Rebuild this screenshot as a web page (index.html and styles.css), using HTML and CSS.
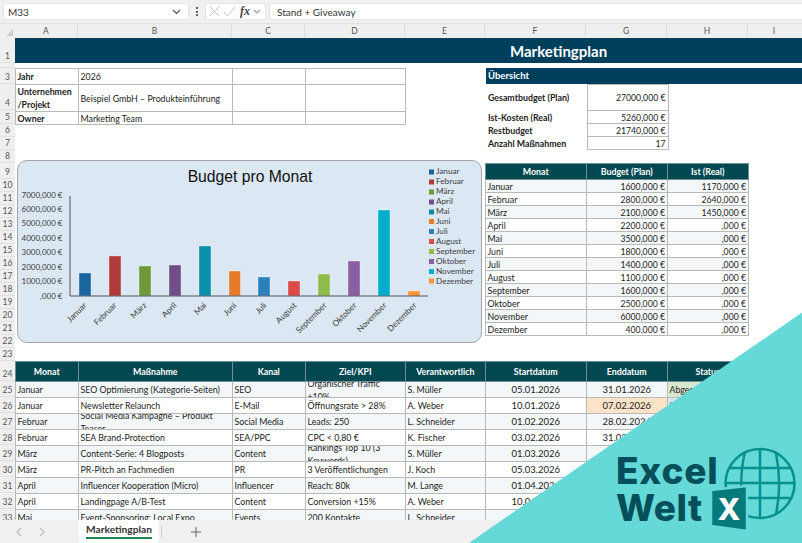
FILE: index.html
```html
<!DOCTYPE html>
<html lang="de">
<head>
<meta charset="utf-8">
<title>Marketingplan</title>
<link rel="stylesheet" href="styles.css">
</head>
<body>
<div class="app">
  <div class="formula-bar">
    <div class="name-box"><span>M33</span>
      <svg class="chev" width="9" height="6" viewBox="0 0 9 6"><path d="M1 1l3.500 3.500L8 1"/></svg>
    </div>
    <div class="dots"><i></i><i></i><i></i></div>
    <div class="fx-box">
      <svg class="mark" width="11" height="11" viewBox="0 0 11 11"><path d="M1 1l9 9M10 1l-9 9"/></svg>
      <svg class="mark" width="13" height="11" viewBox="0 0 13 11"><path d="M1 6l3.500 4L12 1"/></svg>
      <span class="fx">fx</span>
      <svg class="chev light" width="8" height="5" viewBox="0 0 8 5"><path d="M1 1l3 3 3-3"/></svg>
    </div>
    <div class="formula-input">Stand + Giveaway</div>
  </div>

  <div class="col-heads">
    <div class="corner"><svg width="15" height="13" viewBox="0 0 15 13"><path d="M13 5v7H6z"/></svg></div>
    <div class="ch a">A</div><div class="ch b">B</div><div class="ch c">C</div><div class="ch d">D</div>
    <div class="ch e">E</div><div class="ch f">F</div><div class="ch g">G</div><div class="ch h">H</div><div class="ch i">I</div>
  </div>

  <div class="main">
    <div class="row-heads">
      <div class="rh r1">1</div><div class="rh r2"></div><div class="rh r3">3</div><div class="rh r4">4</div>
      <div class="rh r5">5</div><div class="rh">6</div><div class="rh">7</div><div class="rh">8</div>
      <div class="rh r3">9</div><div class="rh">10</div><div class="rh">11</div><div class="rh">12</div>
      <div class="rh">13</div><div class="rh">14</div><div class="rh">15</div><div class="rh">16</div>
      <div class="rh">17</div><div class="rh">18</div><div class="rh">19</div><div class="rh">20</div>
      <div class="rh">21</div><div class="rh">22</div><div class="rh">23</div><div class="rh r24">24</div>
      <div class="rh r3">25</div><div class="rh r3">26</div><div class="rh r3">27</div><div class="rh r3">28</div>
      <div class="rh r3">29</div><div class="rh r3">30</div><div class="rh r3">31</div><div class="rh r3">32</div>
      <div class="rh r3">33</div>
    </div>

    <div class="sheet">
      <div class="banner">Marketingplan</div>

      <div class="top">
        <table class="grid info">
          <colgroup><col class="ca"><col class="cb"><col class="cc"><col class="cd"></colgroup>
          <tr class="h16"><th>Jahr</th><td>2026</td><td></td><td></td></tr>
          <tr class="h26"><th class="wrap">Unternehmen<br>/Projekt</th><td>Beispiel GmbH – Produkteinführung</td><td></td><td></td></tr>
          <tr class="h13"><th>Owner</th><td>Marketing Team</td><td></td><td></td></tr>
        </table>

        <div class="overview">
          <div class="overview-head">Übersicht</div>
          <table class="kpis">
            <colgroup><col class="cf"><col class="cg"></colgroup>
            <tr class="h26"><th>Gesamtbudget (Plan)</th><td>27000,000 €</td></tr>
            <tr class="h13"><th>Ist-Kosten (Real)</th><td>5260,000 €</td></tr>
            <tr class="h13"><th>Restbudget</th><td>21740,000 €</td></tr>
            <tr class="h13"><th>Anzahl Maßnahmen</th><td>17</td></tr>
          </table>
        </div>
      </div>

      <div class="middle">
        <div class="chart">
          <svg width="465" height="183" viewBox="17 160 465 183">
            <text class="c-title" x="250" y="181.500" text-anchor="middle">Budget pro Monat</text>
            <g class="c-tick" text-anchor="end">
              <text x="62.500" y="197.500">7000,000 €</text><text x="62.500" y="211.500">6000,000 €</text>
              <text x="62.500" y="226">5000,000 €</text><text x="62.500" y="241">4000,000 €</text>
              <text x="62.500" y="255">3000,000 €</text><text x="62.500" y="270">2000,000 €</text>
              <text x="62.500" y="284">1000,000 €</text><text x="62.500" y="299">,000 €</text>
            </g>
            <g class="c-bars">
              <rect x="79" y="273" width="12" height="23" fill="#1a659e"/>
              <rect x="109" y="256" width="12" height="40" fill="#b33a3a"/>
              <rect x="139" y="266" width="12" height="30" fill="#6f9a3a"/>
              <rect x="169" y="265" width="12" height="31" fill="#6f4e8a"/>
              <rect x="199" y="246" width="12" height="50" fill="#0a8fa8"/>
              <rect x="229" y="271" width="11.500" height="25" fill="#e67c2a"/>
              <rect x="258" y="277" width="12" height="19" fill="#2a7fbd"/>
              <rect x="288" y="281" width="12" height="15" fill="#dd4a4a"/>
              <rect x="318" y="274" width="12" height="22" fill="#8ebc4b"/>
              <rect x="348" y="261" width="12" height="35" fill="#8b5fa3"/>
              <rect x="378" y="210" width="12" height="86" fill="#00aecb"/>
              <rect x="408" y="291" width="12" height="5" fill="#fb9433"/>
            </g>
            <path class="c-axis" d="M70 196v100h358"/>
            <g class="c-cat" text-anchor="end">
              <text transform="translate(87 306) rotate(-45)">Januar</text>
              <text transform="translate(117 306) rotate(-45)">Februar</text>
              <text transform="translate(147 306) rotate(-45)">März</text>
              <text transform="translate(177 306) rotate(-45)">April</text>
              <text transform="translate(207 306) rotate(-45)">Mai</text>
              <text transform="translate(237 306) rotate(-45)">Juni</text>
              <text transform="translate(267 306) rotate(-45)">Juli</text>
              <text transform="translate(297 306) rotate(-45)">August</text>
              <text transform="translate(327 306) rotate(-45)">September</text>
              <text transform="translate(357 306) rotate(-45)">Oktober</text>
              <text transform="translate(387 306) rotate(-45)">November</text>
              <text transform="translate(417 306) rotate(-45)">Dezember</text>
            </g>
            <g class="c-legend">
              <rect x="429" y="169.500" width="5" height="5" fill="#1a659e"/><text x="436" y="174">Januar</text>
              <rect x="429" y="179.500" width="5" height="5" fill="#b33a3a"/><text x="436" y="184">Februar</text>
              <rect x="429" y="189.500" width="5" height="5" fill="#6f9a3a"/><text x="436" y="194">März</text>
              <rect x="429" y="199.500" width="5" height="5" fill="#6f4e8a"/><text x="436" y="204">April</text>
              <rect x="429" y="209.500" width="5" height="5" fill="#0a8fa8"/><text x="436" y="214">Mai</text>
              <rect x="429" y="219" width="5" height="5" fill="#e67c2a"/><text x="436" y="224">Juni</text>
              <rect x="429" y="229" width="5" height="5" fill="#2a7fbd"/><text x="436" y="234">Juli</text>
              <rect x="429" y="239" width="5" height="5" fill="#dd4a4a"/><text x="436" y="244">August</text>
              <rect x="429" y="249" width="5" height="5" fill="#8ebc4b"/><text x="436" y="254">September</text>
              <rect x="429" y="259" width="5" height="5" fill="#8b5fa3"/><text x="436" y="264">Oktober</text>
              <rect x="429" y="269" width="5" height="5" fill="#00aecb"/><text x="436" y="274">November</text>
              <rect x="429" y="278.500" width="5" height="5" fill="#fb9433"/><text x="436" y="283.500">Dezember</text>
            </g>
          </svg>
        </div>

        <table class="grid months">
          <colgroup><col class="cf"><col class="cg"><col class="cg"></colgroup>
          <tr class="head h16"><th>Monat</th><th>Budget (Plan)</th><th>Ist (Real)</th></tr>
          <tr class="h13 alt"><td>Januar</td><td class="num">1600,000 €</td><td class="num">1170,000 €</td></tr>
          <tr class="h13"><td>Februar</td><td class="num">2800,000 €</td><td class="num">2640,000 €</td></tr>
          <tr class="h13 alt"><td>März</td><td class="num">2100,000 €</td><td class="num">1450,000 €</td></tr>
          <tr class="h13"><td>April</td><td class="num">2200,000 €</td><td class="num">,000 €</td></tr>
          <tr class="h13 alt"><td>Mai</td><td class="num">3500,000 €</td><td class="num">,000 €</td></tr>
          <tr class="h13"><td>Juni</td><td class="num">1800,000 €</td><td class="num">,000 €</td></tr>
          <tr class="h13 alt"><td>Juli</td><td class="num">1400,000 €</td><td class="num">,000 €</td></tr>
          <tr class="h13"><td>August</td><td class="num">1100,000 €</td><td class="num">,000 €</td></tr>
          <tr class="h13 alt"><td>September</td><td class="num">1600,000 €</td><td class="num">,000 €</td></tr>
          <tr class="h13"><td>Oktober</td><td class="num">2500,000 €</td><td class="num">,000 €</td></tr>
          <tr class="h13 alt"><td>November</td><td class="num">6000,000 €</td><td class="num">,000 €</td></tr>
          <tr class="h13"><td>Dezember</td><td class="num">400,000 €</td><td class="num">,000 €</td></tr>
        </table>
      </div>

      <table class="grid plan">
        <colgroup><col class="ca"><col class="cb"><col class="cc"><col class="cd"><col class="ce"><col class="cf"><col class="cg"><col class="cg"></colgroup>
        <tr class="head h20"><th>Monat</th><th>Maßnahme</th><th>Kanal</th><th>Ziel/KPI</th><th>Verantwortlich</th><th>Startdatum</th><th>Enddatum</th><th>Status</th></tr>
        <tr class="h16 alt"><td>Januar</td><td>SEO Optimierung (Kategorie-Seiten)</td><td>SEO</td><td><div class="clip">Organischer Traffic +10%</div></td><td>S. Müller</td><td class="ctr">05.01.2026</td><td class="ctr">31.01.2026</td><td class="done">Abgeschlossen</td></tr>
        <tr class="h16"><td>Januar</td><td>Newsletter Relaunch</td><td>E-Mail</td><td>Öffnungsrate &gt; 28%</td><td>A. Weber</td><td class="ctr">10.01.2026</td><td class="ctr warn">07.02.2026</td><td class="busy">In Arbeit</td></tr>
        <tr class="h16 alt"><td>Februar</td><td><div class="clip">Social Media Kampagne – Produkt Teaser</div></td><td>Social Media</td><td>Leads: 250</td><td>L. Schneider</td><td class="ctr">01.02.2026</td><td class="ctr">28.02.2026</td><td></td></tr>
        <tr class="h16"><td>Februar</td><td>SEA Brand-Protection</td><td>SEA/PPC</td><td>CPC &lt; 0,80 €</td><td>K. Fischer</td><td class="ctr">03.02.2026</td><td class="ctr">31.03.2026</td><td></td></tr>
        <tr class="h16 alt"><td>März</td><td>Content-Serie: 4 Blogposts</td><td>Content</td><td><div class="clip">Rankings Top 10 (3 Keywords)</div></td><td>S. Müller</td><td class="ctr">01.03.2026</td><td></td><td></td></tr>
        <tr class="h16"><td>März</td><td>PR-Pitch an Fachmedien</td><td>PR</td><td>3 Veröffentlichungen</td><td>J. Koch</td><td class="ctr">05.03.2026</td><td></td><td></td></tr>
        <tr class="h16 alt"><td>April</td><td>Influencer Kooperation (Micro)</td><td>Influencer</td><td>Reach: 80k</td><td>M. Lange</td><td class="ctr">01.04.2026</td><td></td><td></td></tr>
        <tr class="h16"><td>April</td><td>Landingpage A/B-Test</td><td>Content</td><td>Conversion +15%</td><td>A. Weber</td><td class="ctr">10.04.2026</td><td></td><td></td></tr>
        <tr class="h16 alt"><td>Mai</td><td>Event-Sponsoring: Local Expo</td><td>Events</td><td>200 Kontakte</td><td>L. Schneider</td><td class="ctr">05.05.2026</td><td></td><td></td></tr>
      </table>
    </div>
  </div>

  <div class="tabs">
    <svg class="nav" width="6" height="10" viewBox="0 0 6 10"><path d="M5 1L1 5l4 4"/></svg>
    <svg class="nav" width="6" height="10" viewBox="0 0 6 10"><path d="M1 1l4 4-4 4"/></svg>
    <div class="tab"><span>Marketingplan</span></div>
    <div class="tab-sep"></div>
    <svg class="plus" width="10" height="10" viewBox="0 0 10 10"><path d="M5 0v10M0 5h10"/></svg>
  </div>

  <svg class="badge" width="333" height="231" viewBox="469 312 333 231">
    <path class="badge-bg" d="M802 312.500V543H469z"/>
    <g class="globe">
      <circle cx="760" cy="483.500" r="34.500"/>
      <path d="M745 452c-5 20-5 44 0 63M760 449v69M776 453c4 20 4 42 0 61M730 468h60M726 483h68M730 498h60"/>
    </g>
    <text class="logo-word excel" x="616" y="483.500">Excel</text>
    <text class="logo-word welt" x="616" y="521">Welt</text>
    <path class="x-box" d="M711 490l36-4v45l-36-5z"/>
    <text class="x-mark" x="729" y="520" text-anchor="middle">X</text>
  </svg>
</div>
</body>
</html>
```
FILE: styles.css
```css
* { box-sizing: border-box; }
html, body { margin: 0; padding: 0; }
body { width: 802px; height: 543px; overflow: hidden; background: #fff; font-family: "Lato", "Liberation Sans", sans-serif; font-size: 8.800px; color: #1c1c1c; }
.app { position: relative; width: 802px; height: 543px; display: flex; flex-direction: column; overflow: hidden; }

.formula-bar { height: 24px; flex: none; display: flex; align-items: flex-start; background: #f0f0f0; padding: 3px 0 0 3px; border-bottom: 1px solid #e2e2e2; }
.name-box { width: 186px; height: 17px; background: #fff; border-radius: 3px; border: 1px solid #e4e4e4; display: flex; align-items: center; justify-content: space-between; padding: 0 7px 0 4px; font-size: 10px; color: #333; }
.chev { fill: none; stroke: #555; stroke-width: 1.200; }
.chev.light { stroke: #999; }
.dots { width: 16px; height: 17px; display: flex; flex-direction: column; align-items: center; justify-content: center; gap: 1.500px; }
.dots i { width: 2px; height: 2px; background: #666; }
.fx-box { width: 61px; height: 17px; background: #fff; border-radius: 3px; border: 1px solid #e4e4e4; display: flex; align-items: center; gap: 3px; padding-left: 3px; }
.mark { fill: none; stroke: #c6c6c6; stroke-width: 1; }
.fx { font-family: "Liberation Serif", serif; font-style: italic; font-size: 12px; font-weight: 700; color: #444; margin-left: 1px; }
.formula-input { flex: 1; height: 17px; margin-left: 3px; background: #fff; border: 1px solid #e4e4e4; border-right: 0; border-radius: 3px 0 0 3px; padding-left: 7px; display: flex; align-items: center; font-size: 10px; color: #333; }

.col-heads { height: 14px; flex: none; display: flex; background: #efefef; }
.corner { width: 15px; }
.corner path { fill: #cfcfcf; }
.ch { text-align: center; font-size: 8.500px; line-height: 14px; color: #555; border-right: 1px solid #dcdcdc; }
.ch.a { width: 63px; }
.ch.b { width: 154px; }
.ch.c { width: 73px; }
.ch.d { width: 100px; }
.ch.e { width: 80px; }
.ch.f { width: 101px; }
.ch.g { width: 81px; }
.ch.h { width: 81px; }
.ch.i { flex: 1; border-right: 0; padding-right: 2px; }

.main { flex: 1; min-height: 0; display: flex; overflow: hidden; }
.row-heads { width: 15px; flex: none; background: #efefef; }
.rh { height: 13px; font-size: 8.500px; line-height: 11px; color: #555; border-bottom: 1px solid #e0e0e0; display: flex; align-items: flex-end; justify-content: center; }
.rh.r1 { height: 25px; }
.rh.r2 { height: 5px; }
.rh.r3 { height: 16px; }
.rh.r4 { height: 26px; }
.rh.r5 { height: 14px; }
.rh.r24 { height: 20px; }

.sheet { flex: 1; min-width: 0; }
.banner { height: 25px; background: #003f5b; color: #fff; font-weight: 700; font-size: 15px; line-height: 27px; padding-left: 495px; margin-bottom: 5px; }

.top { display: flex; align-items: flex-start; gap: 80px; height: 82px; }
.grid, .kpis { border-collapse: collapse; table-layout: fixed; flex: none; }
.grid td, .grid th { border: 1px solid #b9b9b9; padding: 0 2px 0 1.500px; overflow: hidden; white-space: nowrap; font-weight: 400; text-align: left; line-height: 11px; }
.grid th { font-weight: 700; }
.ca { width: 63px; }
.cb { width: 154px; }
.cc { width: 73px; }
.cd { width: 100px; }
.ce { width: 80px; }
.cf { width: 101px; }
.cg { width: 81px; }
.h13 { height: 13px; }
.h16 { height: 16px; }
.h20 { height: 20px; }
.h26 { height: 26px; }
.info { width: 390px; }
.info th.wrap { line-height: 13px; }

.overview { flex: 1; min-width: 0; }
.overview-head { height: 16px; background: #003f5b; color: #fff; font-weight: 700; font-size: 9.500px; line-height: 16px; padding-left: 2px; }
.kpis { width: 182px; }
.kpis th { text-align: left; font-weight: 700; font-size: 8.800px; padding: 0 2px; line-height: 11px; white-space: nowrap; }
.kpis td { border: 1px solid #b9b9b9; text-align: right; font-size: 8.700px; padding: 0 2px; line-height: 11px; }

.middle { display: flex; align-items: flex-start; gap: 3px; height: 201px; margin-top: 10px; padding-left: 2px; }
.chart { width: 465px; height: 183px; flex: none; background: #dbe7f3; border: 1px solid #a6a6a6; border-radius: 10px; overflow: hidden; }
.chart svg { display: block; margin: -1px; }
.c-title { font-family: "Liberation Sans", sans-serif; font-size: 15.700px; fill: #111; }
.c-tick { font-family: "Lato", sans-serif; font-size: 8px; fill: #404040; }
.c-cat, .c-legend { font-family: "Lato", sans-serif; font-size: 8.200px; fill: #404040; }
.c-bars rect { stroke: #fff; stroke-opacity: .35; stroke-width: 1; }
.c-axis { fill: none; stroke: #50565c; stroke-width: 1; }
.months { width: 263px; margin-top: 3px; }
.head th { background: #024850; color: #fff; text-align: center; border-color: #6d8f95; }
.alt td { background: #f3f7f9; }
.grid td.num { text-align: right; font-size: 8.700px; }
.grid td.ctr { text-align: center; font-size: 9.500px; }
.grid td.warn { background: #fde3c8; }
.grid td.done { background: #d8e9d2; }
.grid td.busy { background: #dce6f1; }

.plan { width: 733px; }
.clip { height: 15px; display: flex; align-items: center; overflow: hidden; white-space: normal; line-height: 13px; }

.tabs { height: 23px; flex: none; display: flex; align-items: center; background: #f0f0f0; position: relative; padding-left: 16px; }
.nav { fill: none; stroke: #bcbcbc; stroke-width: 1.200; margin-right: 17px; }
.tab { width: 80px; height: 23px; margin-left: 17px; background: #fff; border-radius: 0 0 4px 4px; text-align: center; font-weight: 700; font-size: 10.200px; color: #333; padding-top: 3px; }
.tab span { display: inline-block; line-height: 13px; border-bottom: 2px solid #1e8a4f; padding-bottom: 1px; }
.tab-sep { width: 1px; height: 13px; margin-left: 2px; background: #cfcfcf; }
.plus { fill: none; stroke: #666; stroke-width: 1; margin-left: 29px; }

.badge { position: absolute; right: 0; bottom: 0; }
.badge-bg { fill: #65d9d8; }
.logo-word { font-family: "Inter", sans-serif; font-weight: 800; font-size: 37px; fill: #03505a; }
.excel { letter-spacing: .800px; }
.welt { letter-spacing: .500px; }
.globe { fill: none; stroke: #06908f; stroke-width: 2.500; }
.x-box { fill: #047a7c; stroke: #65d9d8; stroke-width: 2.500; }
.x-mark { font-family: "Inter", sans-serif; font-weight: 800; font-size: 30px; fill: #fff; }
```
